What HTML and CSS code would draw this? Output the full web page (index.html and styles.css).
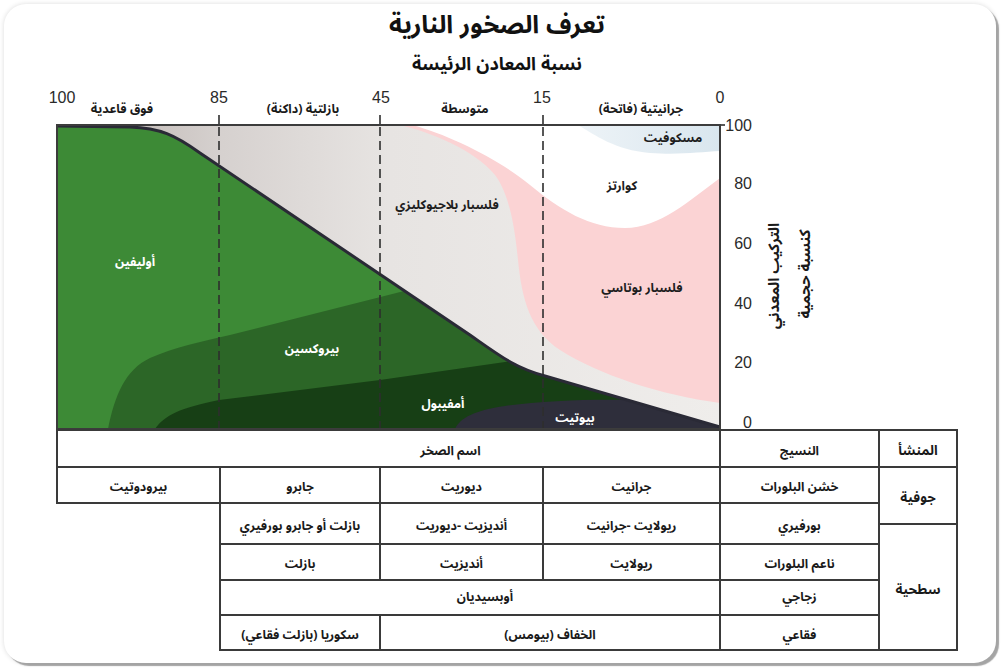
FILE: index.html
```html
<!DOCTYPE html>
<html lang="ar">
<head>
<meta charset="utf-8">
<title>تعرف الصخور النارية</title>
<link rel="stylesheet" href="styles.css">
</head>
<body>
<div class="card">
  <div class="head">
    <h1 class="title">تعرف الصخور النارية</h1>
    <h2 class="subtitle">نسبة المعادن الرئيسة</h2>
  </div>

  <svg class="chart" viewBox="40 85 800 345" width="800" height="345" xmlns="http://www.w3.org/2000/svg">
    <defs>
      <linearGradient id="gGrey" x1="57" y1="0" x2="720" y2="0" gradientUnits="userSpaceOnUse">
        <stop offset="0" stop-color="#b8afab"/>
        <stop offset="0.25" stop-color="#d6d1cf"/>
        <stop offset="0.5" stop-color="#e7e4e2"/>
        <stop offset="1" stop-color="#efedeb"/>
      </linearGradient>
      <linearGradient id="gBlue" x1="580" y1="0" x2="720" y2="0" gradientUnits="userSpaceOnUse">
        <stop offset="0" stop-color="#edf3f7"/>
        <stop offset="1" stop-color="#d9e6ee"/>
      </linearGradient>
      <clipPath id="below">
        <path d="M57,126 L130,127 C160,128 175,135 200,153 L470,335 C500,356 515,368 545,376 C600,392 660,410 720,427 L720,429 L57,429 Z"/>
      </clipPath>
    </defs>

    <rect x="57" y="125" width="663" height="304" fill="url(#gGrey)"/>
    <path fill="#fbd3d4" d="M400,125 C430,132 475,150 495,175 C510,195 515,230 518,260 C522,300 530,330 560,350 C600,375 660,395 720,403 L720,125 Z"/>
    <path fill="#ffffff" d="M412,125 C450,135 500,160 530,185 C560,210 590,228 625,228 C660,228 690,200 720,178 L720,125 Z"/>
    <path fill="url(#gBlue)" d="M578,125 C595,135 615,150 650,153 C680,155 700,152 720,151 L720,125 Z"/>

    <g clip-path="url(#below)">
      <rect x="57" y="120" width="663" height="310" fill="#3d8a36"/>
      <path fill="#2c6627" d="M108,429 C115,395 125,370 150,358 C175,347 200,342 230,335 L420,287 L720,200 L720,429 Z"/>
      <path fill="#173f15" d="M155,429 C165,415 180,408 219,400 L380,380 L505,362 L720,330 L720,429 Z"/>
      <path fill="#2e2e3b" d="M455,429 C460,418 475,410 505,406 C540,401 590,399 630,400 L720,395 L720,429 Z"/>
    </g>

    <path fill="none" stroke="#2a2a36" stroke-width="3" d="M57,126 L130,127 C160,128 175,135 200,153 L470,335 C500,356 515,368 545,376 C600,392 660,410 720,427"/>

    <g stroke="#2e2e2e" stroke-width="1.6">
      <line x1="219" y1="115" x2="219" y2="125"/>
      <line x1="380" y1="115" x2="380" y2="125"/>
      <line x1="543" y1="115" x2="543" y2="125"/>
      <line x1="720" y1="125" x2="725" y2="125"/>
    </g>
    <g stroke="#2e2e2e" stroke-width="1.6" stroke-dasharray="9 5">
      <line x1="219" y1="127" x2="219" y2="428"/>
      <line x1="380" y1="127" x2="380" y2="428"/>
      <line x1="543" y1="127" x2="543" y2="428"/>
    </g>
    <rect x="57" y="125" width="663" height="304" fill="none" stroke="#3c3c3c" stroke-width="2"/>

    <g class="num">
      <text x="62" y="103" text-anchor="middle">100</text>
      <text x="219" y="103" text-anchor="middle">85</text>
      <text x="381" y="103" text-anchor="middle">45</text>
      <text x="542" y="103" text-anchor="middle">15</text>
      <text x="720" y="103" text-anchor="middle">0</text>
    </g>
    <g class="cat">
      <text x="122" y="113" text-anchor="middle">فوق قاعدية</text>
      <text x="303" y="113" text-anchor="middle">بازلتية (داكنة)</text>
      <text x="465" y="113" text-anchor="middle">متوسطة</text>
      <text x="641" y="113" text-anchor="middle">جرانيتية (فاتحة)</text>
    </g>

    <g class="num">
      <text x="752" y="131" text-anchor="end">100</text>
      <text x="752" y="189" text-anchor="end">80</text>
      <text x="752" y="249" text-anchor="end">60</text>
      <text x="752" y="309" text-anchor="end">40</text>
      <text x="752" y="368" text-anchor="end">20</text>
      <text x="752" y="428" text-anchor="end">0</text>
    </g>
    <g class="axis-title">
      <text transform="translate(779,276) rotate(-90)" text-anchor="middle">التركيب المعدني</text>
      <text transform="translate(810,274) rotate(-90)" text-anchor="middle">كنسبة حجمية</text>
    </g>

    <g class="lbl">
      <text x="447" y="209" text-anchor="middle">فلسبار بلاجيوكليزي</text>
      <text x="642" y="292" text-anchor="middle">فلسبار بوتاسي</text>
      <text x="622" y="190" text-anchor="middle">كوارتز</text>
      <text x="673" y="142" text-anchor="middle">مسكوفيت</text>
    </g>
    <g class="lbl white">
      <text x="135" y="266" text-anchor="middle">أوليفين</text>
      <text x="312" y="353" text-anchor="middle">بيروكسين</text>
      <text x="443" y="408" text-anchor="middle">أمفيبول</text>
      <text x="575" y="422" text-anchor="middle">بيوتيت</text>
    </g>
  </svg>

  <div class="table">
    <div class="cell name-h">اسم الصخر</div>
    <div class="cell tex-h">النسيج</div>
    <div class="cell org-h">المنشأ</div>

    <div class="cell c1 r2">بيرودوتيت</div>
    <div class="cell c2 r2">جابرو</div>
    <div class="cell c3 r2">ديوريت</div>
    <div class="cell c4 r2">جرانيت</div>
    <div class="cell c5 r2">خشن البلورات</div>
    <div class="cell org-in">جوفية</div>

    <div class="cell c2 r3 low">بازلت أو جابرو بورفيري</div>
    <div class="cell c3 r3 low">أنديزيت -ديوريت</div>
    <div class="cell c4 r3 low">ريولايت -جرانيت</div>
    <div class="cell c5 r3 low">بورفيري</div>
    <div class="cell org-ex">سطحية</div>

    <div class="cell c2 r5">بازلت</div>
    <div class="cell c3 r5">أنديزيت</div>
    <div class="cell c4 r5">ريولايت</div>
    <div class="cell c5 r5">ناعم البلورات</div>

    <div class="cell obs r6 low">أوبسيديان</div>
    <div class="cell c5 r6 low">زجاجي</div>

    <div class="cell c2 r7">سكوريا (بازلت فقاعي)</div>
    <div class="cell pum r7">الخفاف (بيومس)</div>
    <div class="cell c5 r7">فقاعي</div>
  </div>
</div>
</body>
</html>
```

FILE: styles.css
```css
html, body {
  margin: 0;
  padding: 0;
  background: #ffffff;
}

body {
  width: 1002px;
  height: 670px;
  overflow: hidden;
  font-family: "Noto Sans Arabic", "Noto Kufi Arabic", "DejaVu Sans", sans-serif;
  color: #1a1a1a;
}

.card {
  box-sizing: border-box;
  width: 992px;
  height: 659px;
  margin: 4px 0 0 4px;
  background: #ffffff;
  border-radius: 22px;
  box-shadow: 3px 3px 1px #a4a4a4, 0 0 5px rgba(0, 0, 0, 0.14);
}

.head {
  box-sizing: border-box;
  height: 81px;
  padding: 6px 6px 0 0;
  text-align: center;
  direction: rtl;
  font-family: "Liberation Sans", "Noto Sans Arabic", "DejaVu Sans", sans-serif;
}

.title {
  margin: 0;
  font-size: 25px;
  line-height: 28px;
  font-weight: bold;
  color: #111111;
}

.subtitle {
  margin: 15px 0 0;
  font-size: 18px;
  line-height: 22px;
  font-weight: bold;
  color: #111111;
}

.chart {
  display: block;
  margin-left: 36px;
}

.chart text {
  direction: rtl;
}

.num text {
  font-family: "Liberation Sans", Arial, sans-serif;
  font-size: 16px;
  fill: #2a2a2a;
  direction: ltr;
}

.cat text {
  font-size: 12.5px;
  font-weight: bold;
  fill: #1a1a1a;
}

.axis-title text {
  font-size: 15px;
  font-weight: bold;
  fill: #1a1a1a;
}

.lbl text {
  font-size: 12.5px;
  font-weight: bold;
  fill: #1e1e1e;
}

.lbl.white text {
  fill: #ffffff;
}

.table {
  display: grid;
  margin-left: 53px;
  width: 900px;
  grid-template-columns: 163px 160px 163px 177px 159px 78px;
  grid-template-rows: 37px 36px 21px 20px 36px 35px 35px;
}

.cell {
  display: flex;
  align-items: center;
  justify-content: center;
  direction: rtl;
  font-size: 12.5px;
  font-weight: bold;
  color: #1a1a1a;
  box-shadow: 0 0 0 1px #3a3a3a, inset 0 0 0 1px #3a3a3a;
  padding-top: 4px;
  box-sizing: border-box;
}

.cell.low {
  align-items: flex-end;
  padding-bottom: 5px;
}

.name-h { grid-column: 1 / 5; grid-row: 1; padding-left: 124px; }
.tex-h { grid-column: 5; grid-row: 1; }
.org-h { grid-column: 6; grid-row: 1; font-size: 13.5px; }

.c1 { grid-column: 1; }
.c2 { grid-column: 2; }
.c3 { grid-column: 3; }
.c4 { grid-column: 4; }
.c5 { grid-column: 5; }

.r2 { grid-row: 2; }
.r3 { grid-row: 3 / 5; }
.r5 { grid-row: 5; }
.r6 { grid-row: 6; }
.r7 { grid-row: 7; }

.obs { grid-column: 2 / 5; padding-left: 30px; }
.pum { grid-column: 3 / 5; }

.org-in { grid-column: 6; grid-row: 2 / 4; font-size: 13.5px; }
.org-ex { grid-column: 6; grid-row: 4 / 8; font-size: 13.5px; }
```
